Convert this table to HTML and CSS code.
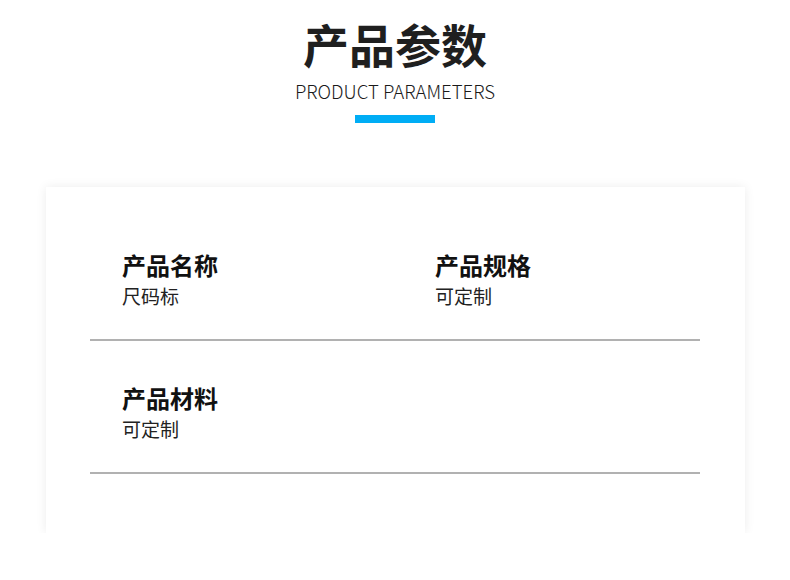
FILE: index.html
```html
<!DOCTYPE html>
<html lang="zh-CN">
<head>
<meta charset="utf-8">
<link rel="stylesheet" href="styles.css">
</head>
<body>
<header class="head">
  <h1 class="title">产品参数</h1>
  <p class="subtitle">PRODUCT PARAMETERS</p>
  <div class="bar"></div>
</header>
<section class="card">
  <div class="row">
    <div class="cell">
      <div class="label">产品名称</div>
      <div class="value">尺码标</div>
    </div>
    <div class="cell">
      <div class="label">产品规格</div>
      <div class="value">可定制</div>
    </div>
  </div>
  <div class="row">
    <div class="cell">
      <div class="label">产品材料</div>
      <div class="value">可定制</div>
    </div>
  </div>
</section>
</body>
</html>
```
FILE: styles.css
```css
html, body {
  margin: 0;
  padding: 0;
  background: #ffffff;
}
body {
  width: 790px;
  font-family: "Noto Sans CJK SC", "Noto Sans", sans-serif;
  color: #222;
}
.head {
  display: flex;
  flex-direction: column;
  align-items: center;
  padding-top: 20px;
}
.title {
  margin: 0;
  font-size: 46px;
  line-height: 46px;
  font-weight: 700;
  color: #1f1f1f;
}
.subtitle {
  margin: 13px 0 0;
  font-size: 18.6px;
  line-height: 24px;
  font-weight: 300;
  color: #1a1a1a;
}
.bar {
  margin-top: 12px;
  width: 80px;
  height: 8px;
  background: #00adf5;
}
.card {
  margin: 64px 0 0 46px;
  width: 699px;
  box-sizing: border-box;
  padding: 21px 45px 59px 44px;
  background: #fff;
  box-shadow: 0 0 10px rgba(0, 0, 0, 0.08);
}
.row {
  display: grid;
  grid-template-columns: 313px 1fr;
  padding: 42px 0 31px 32px;
  border-bottom: 2px solid #b1b1b1;
}
.label {
  font-size: 24px;
  line-height: 30px;
  font-weight: 700;
  color: #111;
}
.value {
  margin-top: 3px;
  font-size: 19px;
  line-height: 25px;
  font-weight: 400;
  color: #222;
}
```
